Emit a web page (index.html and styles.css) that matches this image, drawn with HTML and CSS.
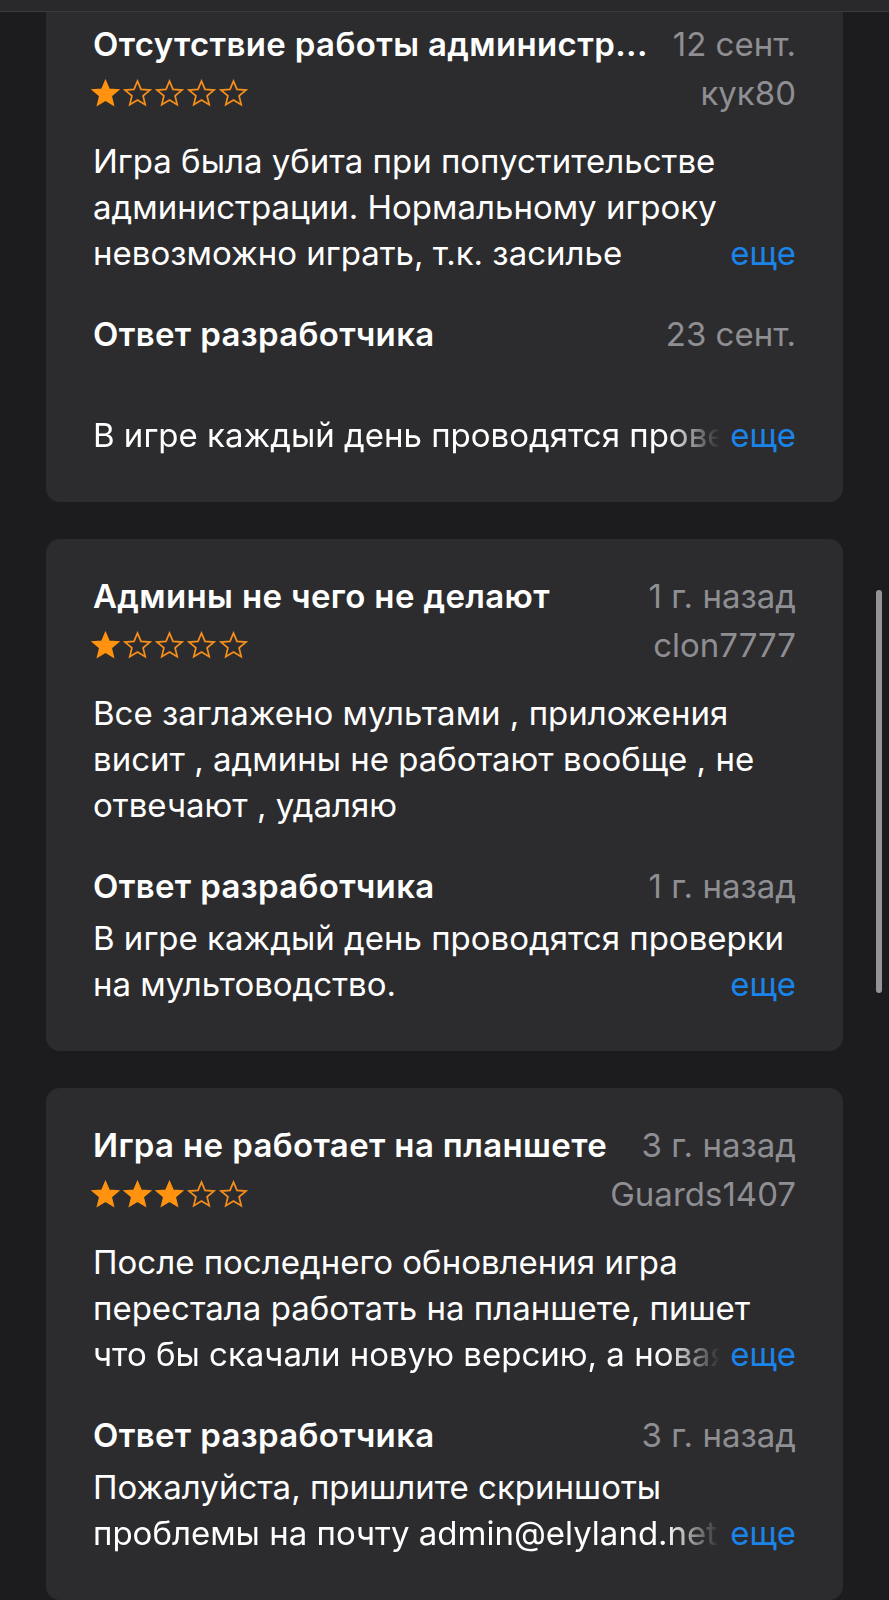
FILE: index.html
```html
<!DOCTYPE html>
<html lang="ru">
<head>
<meta charset="utf-8">
<title>Отзывы</title>
<link rel="stylesheet" href="styles.css">
</head>
<body>
<div class="topbar"></div>
<div class="scrollthumb"></div>
<main class="list">
  <article class="card">
    <div class="row">
      <h2 class="title">Отсутствие работы администр...</h2>
      <span class="meta">12 сент.</span>
    </div>
    <div class="row row-stars">
      <span class="stars" data-rating="1">
        <svg class="star on" viewBox="0 0 24 24"><path d="M12 1.8l3 7.1 7.6.6-5.8 5 1.8 7.5L12 18 5.4 22l1.8-7.5-5.8-5 7.6-.6z"/></svg><svg class="star" viewBox="0 0 24 24"><path d="M12 1.8l3 7.1 7.6.6-5.8 5 1.8 7.5L12 18 5.4 22l1.8-7.5-5.8-5 7.6-.6z"/></svg><svg class="star" viewBox="0 0 24 24"><path d="M12 1.8l3 7.1 7.6.6-5.8 5 1.8 7.5L12 18 5.4 22l1.8-7.5-5.8-5 7.6-.6z"/></svg><svg class="star" viewBox="0 0 24 24"><path d="M12 1.8l3 7.1 7.6.6-5.8 5 1.8 7.5L12 18 5.4 22l1.8-7.5-5.8-5 7.6-.6z"/></svg><svg class="star" viewBox="0 0 24 24"><path d="M12 1.8l3 7.1 7.6.6-5.8 5 1.8 7.5L12 18 5.4 22l1.8-7.5-5.8-5 7.6-.6z"/></svg>
      </span>
      <span class="meta">кук80</span>
    </div>
    <div class="text body">
      <div class="line">Игра была убита при попустительстве</div>
      <div class="line">администрации. Нормальному игроку</div>
      <div class="line last"><span class="clip">невозможно играть, т.к. засилье</span><a class="more" href="#">еще</a></div>
    </div>
    <div class="row reply-head">
      <h3 class="title">Ответ разработчика</h3>
      <span class="meta">23 сент.</span>
    </div>
    <div class="text reply">
      <div class="line blank">&nbsp;</div>
      <div class="line last"><span class="clip fade">В игре каждый день проводятся проверки на мультоводство.</span><a class="more" href="#">еще</a></div>
    </div>
  </article>

  <article class="card">
    <div class="row">
      <h2 class="title">Админы не чего не делают</h2>
      <span class="meta">1 г. назад</span>
    </div>
    <div class="row row-stars">
      <span class="stars" data-rating="1">
        <svg class="star on" viewBox="0 0 24 24"><path d="M12 1.8l3 7.1 7.6.6-5.8 5 1.8 7.5L12 18 5.4 22l1.8-7.5-5.8-5 7.6-.6z"/></svg><svg class="star" viewBox="0 0 24 24"><path d="M12 1.8l3 7.1 7.6.6-5.8 5 1.8 7.5L12 18 5.4 22l1.8-7.5-5.8-5 7.6-.6z"/></svg><svg class="star" viewBox="0 0 24 24"><path d="M12 1.8l3 7.1 7.6.6-5.8 5 1.8 7.5L12 18 5.4 22l1.8-7.5-5.8-5 7.6-.6z"/></svg><svg class="star" viewBox="0 0 24 24"><path d="M12 1.8l3 7.1 7.6.6-5.8 5 1.8 7.5L12 18 5.4 22l1.8-7.5-5.8-5 7.6-.6z"/></svg><svg class="star" viewBox="0 0 24 24"><path d="M12 1.8l3 7.1 7.6.6-5.8 5 1.8 7.5L12 18 5.4 22l1.8-7.5-5.8-5 7.6-.6z"/></svg>
      </span>
      <span class="meta">clon7777</span>
    </div>
    <div class="text body">
      <div class="line">Все заглажено мультами , приложения</div>
      <div class="line">висит , админы не работают вообще , не</div>
      <div class="line">отвечают , удаляю</div>
    </div>
    <div class="row reply-head">
      <h3 class="title">Ответ разработчика</h3>
      <span class="meta">1 г. назад</span>
    </div>
    <div class="text reply">
      <div class="line">В игре каждый день проводятся проверки</div>
      <div class="line last"><span class="clip">на мультоводство.</span><a class="more" href="#">еще</a></div>
    </div>
  </article>

  <article class="card">
    <div class="row">
      <h2 class="title">Игра не работает на планшете</h2>
      <span class="meta">3 г. назад</span>
    </div>
    <div class="row row-stars">
      <span class="stars" data-rating="3">
        <svg class="star on" viewBox="0 0 24 24"><path d="M12 1.8l3 7.1 7.6.6-5.8 5 1.8 7.5L12 18 5.4 22l1.8-7.5-5.8-5 7.6-.6z"/></svg><svg class="star on" viewBox="0 0 24 24"><path d="M12 1.8l3 7.1 7.6.6-5.8 5 1.8 7.5L12 18 5.4 22l1.8-7.5-5.8-5 7.6-.6z"/></svg><svg class="star on" viewBox="0 0 24 24"><path d="M12 1.8l3 7.1 7.6.6-5.8 5 1.8 7.5L12 18 5.4 22l1.8-7.5-5.8-5 7.6-.6z"/></svg><svg class="star" viewBox="0 0 24 24"><path d="M12 1.8l3 7.1 7.6.6-5.8 5 1.8 7.5L12 18 5.4 22l1.8-7.5-5.8-5 7.6-.6z"/></svg><svg class="star" viewBox="0 0 24 24"><path d="M12 1.8l3 7.1 7.6.6-5.8 5 1.8 7.5L12 18 5.4 22l1.8-7.5-5.8-5 7.6-.6z"/></svg>
      </span>
      <span class="meta">Guards1407</span>
    </div>
    <div class="text body">
      <div class="line">После последнего обновления игра</div>
      <div class="line">перестала работать на планшете, пишет</div>
      <div class="line last"><span class="clip fade">что бы скачали новую версию, а новая версия</span><a class="more" href="#">еще</a></div>
    </div>
    <div class="row reply-head">
      <h3 class="title">Ответ разработчика</h3>
      <span class="meta">3 г. назад</span>
    </div>
    <div class="text reply">
      <div class="line">Пожалуйста, пришлите скриншоты</div>
      <div class="line last"><span class="clip fade">проблемы на почту admin@elyland.net</span><a class="more" href="#">еще</a></div>
    </div>
  </article>
</main>
</body>
</html>
```

FILE: styles.css
```css
* { box-sizing: border-box; }

html, body {
  margin: 0;
  padding: 0;
  background: #1c1c1e;
}

body {
  font-family: Inter, "Noto Sans", "DejaVu Sans", sans-serif;
  color: #ffffff;
  -webkit-font-smoothing: antialiased;
}

.topbar {
  position: fixed;
  top: 0;
  left: 0;
  right: 0;
  height: 12px;
  background: #29292b;
  border-bottom: 1px solid #3a3a3c;
  z-index: 5;
}

.scrollthumb {
  position: fixed;
  left: 876px;
  top: 590px;
  width: 6px;
  height: 403px;
  border-radius: 3px;
  background: #949496;
  z-index: 5;
}

.list {
  display: flex;
  flex-direction: column;
  gap: 37px;
  margin-top: -13px;
  padding: 0 46px;
}

.card {
  background: #2c2c2e;
  border-radius: 14px;
  padding: 37px 47px 44px 47px;
}

.row {
  display: flex;
  justify-content: space-between;
  align-items: center;
  height: 40px;
}

.row-stars { margin-top: 9px; }

.title {
  margin: 0;
  font-size: 33px;
  font-weight: 600;
  letter-spacing: 0.35px;
  white-space: nowrap;
}

.meta {
  font-size: 33px;
  color: #8e8e93;
  white-space: nowrap;
}

.stars {
  display: flex;
  gap: 3px;
  margin-left: -2px;
}

.star {
  width: 29px;
  height: 28px;
  fill: none;
  stroke: #f48e1c;
  stroke-width: 1.5;
  stroke-linejoin: miter;
}

.star.on {
  fill: #ff9310;
  stroke: #ff9310;
}

.text {
  font-size: 33px;
  line-height: 46px;
}

.body { margin-top: 25px; }

.reply-head { margin-top: 38px; }

.reply { margin-top: 9px; }

.line { white-space: nowrap; }

.line.blank { height: 49px; }

.line.last {
  display: flex;
  align-items: baseline;
}

.clip {
  flex: 1;
  overflow: hidden;
  white-space: nowrap;
}

.clip.fade {
  -webkit-mask-image: linear-gradient(to right, #000 calc(100% - 56px), transparent calc(100% - 2px));
  mask-image: linear-gradient(to right, #000 calc(100% - 56px), transparent calc(100% - 2px));
}

.more {
  color: #1a84ea;
  text-decoration: none;
  margin-left: 8px;
}
```
